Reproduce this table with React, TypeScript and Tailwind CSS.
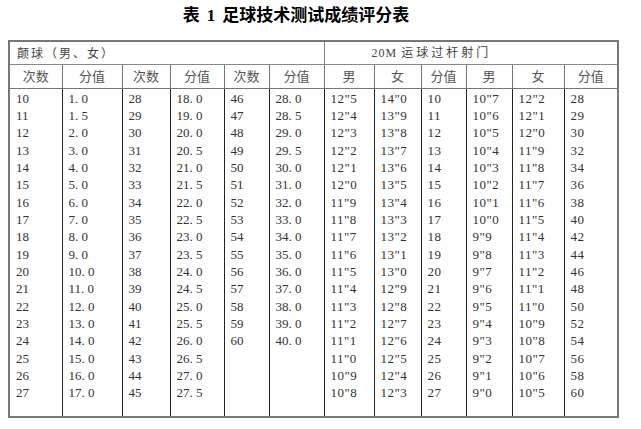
const range = (a: number, b: number, step = 1) => {
  const out: number[] = [];
  for (let i = a; i <= b; i += step) out.push(i);
  return out;
};

// times such as 12"5, counting down by tenths
const desc = (from: [number, number], count: number) => {
  const out: string[] = [];
  let [s, t] = from;
  for (let i = 0; i < count; i++) {
    out.push(`${s}"${t}`);
    t -= 1;
    if (t < 0) { t = 9; s -= 1; }
  }
  return out;
};

const fmt = (n: number) => `${Math.floor(n)}. ${n % 1 ? 5 : 0}`;

const cols: string[][] = [
  range(10, 27).map(String),
  [1, 1.5, ...range(2, 17)].map(fmt),
  range(28, 45).map(String),
  [18, 19, 20, 20.5, 21, 21.5, 22, 22.5, 23, 23.5, 24, 24.5, 25, 25.5, 26, 26.5, 27, 27.5].map(fmt),
  range(46, 60).map(String),
  [28, 28.5, 29, 29.5, ...range(30, 40)].map(fmt),
  desc([12, 5], 18),
  desc([14, 0], 18),
  range(10, 27).map(String),
  desc([10, 7], 18),
  desc([12, 2], 18),
  [28, 29, 30, ...range(32, 60, 2)].map(String),
];

const widths = [
  "w-[53px]", "w-[60px]", "w-[48px]", "w-[54px]", "w-[45px]", "w-[55px]",
  "w-[50px]", "w-[47px]", "w-[45px]", "w-[46px]", "w-[52px]", "w-[54px]",
];
const heads = ["次数", "分值", "次数", "分值", "次数", "分值", "男", "女", "分值", "男", "女", "分值"];

export default function App() {
  return (
    <div className="w-[641px] h-[429px] bg-white overflow-hidden font-['Liberation_Serif','Noto_Sans_CJK_SC',serif]">
      <div className="w-[592px] pt-[5px] h-[40px] flex justify-center text-[17px] font-bold text-black leading-[22px]">
        <span>表</span>
        <span className="mx-[7px]">1</span>
        <span>足球技术测试成绩评分表</span>
      </div>
      <table className="ml-[8px] w-[610px] table-fixed border-collapse border-2 border-[#777] text-[#333]">
        <colgroup>
          {widths.map((w, i) => <col key={i} className={w} />)}
        </colgroup>
        <tbody>
          <tr className="h-[23px]">
            <td colSpan={6} className="border border-[#888] pl-[7px] text-[12px] tracking-[2px] text-[#444] align-middle font-['Noto_Sans_CJK_SC',sans-serif]">
              颠球（男、女）
            </td>
            <td colSpan={6} className="border border-[#888] pl-[47px] text-[12px] text-[#444] align-middle font-['Noto_Sans_CJK_SC',sans-serif]">
              <span className="tracking-[1px] font-['Liberation_Serif',serif]">20M </span>
              <span className="tracking-[3px]">运球过杆射门</span>
            </td>
          </tr>
          <tr className="h-[24px]">
            {heads.map((h, i) => (
              <td key={i} className="border border-[#777] text-center text-[13px] text-[#555] align-middle font-['Noto_Sans_CJK_SC',sans-serif]">
                {h}
              </td>
            ))}
          </tr>
          <tr className="h-[329px]">
            {cols.map((c, i) => (
              <td key={i} className={i >= 6
                ? "align-top pl-[6px] pt-[1px] text-[13px] leading-[17.35px] border-l border-[#222] tracking-[0.5px]"
                : "align-top pl-[6px] pt-[1px] text-[13px] leading-[17.35px] border-l border-[#222]"}>
                {c.map((v, j) => <div key={j}>{v}</div>)}
              </td>
            ))}
          </tr>
        </tbody>
      </table>
    </div>
  );
}
